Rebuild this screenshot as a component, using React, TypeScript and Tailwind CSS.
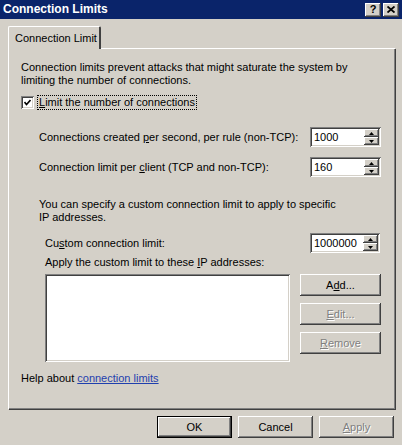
import React from 'react';

const raised =
  'bg-[#d4d0c8] shadow-[inset_-1px_-1px_#404040,inset_1px_1px_#ffffff,inset_-2px_-2px_#808080,inset_2px_2px_#d4d0c8]';
const sunken =
  'bg-white shadow-[inset_1px_1px_#808080,inset_-1px_-1px_#ffffff,inset_2px_2px_#404040,inset_-2px_-2px_#d4d0c8]';
const disabledText = 'text-[#808080] [text-shadow:1px_1px_0_#ffffff]';

const Spinner: React.FC<{ value: string; width?: string }> = ({ value, width = 'w-[71px]' }) => (
  <div className={`${sunken} ${width} h-[20px] flex items-stretch p-[2px] shrink-0`}>
    <div className="flex-1 flex items-center pl-[2px] pt-[1px]">{value}</div>
    <div className="w-[15px] flex flex-col">
      <div className={`${raised} flex-1 flex items-center justify-center`}>
        <svg width="5" height="3" viewBox="0 0 5 3">
          <path d="M2.5 0 L5 3 L0 3 Z" fill="#000" />
        </svg>
      </div>
      <div className={`${raised} flex-1 flex items-center justify-center`}>
        <svg width="5" height="3" viewBox="0 0 5 3">
          <path d="M0 0 L5 0 L2.5 3 Z" fill="#000" />
        </svg>
      </div>
    </div>
  </div>
);

const Button: React.FC<{ children: React.ReactNode; disabled?: boolean; isDefault?: boolean; className?: string }> = ({
  children,
  disabled,
  isDefault,
  className = '',
}) => (
  <div
    className={`${className} flex items-center justify-center ${
      isDefault
        ? 'bg-[#d4d0c8] border border-black shadow-[inset_-1px_-1px_#404040,inset_1px_1px_#ffffff,inset_-2px_-2px_#808080]'
        : raised
    } ${disabled ? disabledText : ''}`}
  >
    {children}
  </div>
);

const App: React.FC = () => {
  return (
    <div className="w-[402px] h-[445px] bg-[#d4d0c8] text-black text-[11px] leading-[13px] font-['Liberation_Sans',Arial,sans-serif] flex flex-col overflow-hidden select-none">
      {/* title bar */}
      <div className="h-[19px] bg-[#0a246a] flex items-center pl-[3px] pr-[3px]">
        <span className="text-white font-bold text-[12px]">Connection Limits</span>
        <div className="ml-auto flex gap-[2px]">
          <div className={`${raised} w-[16px] h-[14px] flex items-center justify-center font-bold text-[11px]`}>?</div>
          <div className={`${raised} w-[16px] h-[14px] flex items-center justify-center`}>
            <svg width="8" height="7" viewBox="0 0 8 7">
              <path d="M0.5 0.5 L7.5 6.5 M7.5 0.5 L0.5 6.5" stroke="#000" strokeWidth="1.8" />
            </svg>
          </div>
        </div>
      </div>

      {/* tab strip */}
      <div className="ml-[8px] mt-[7px] flex relative z-10">
        <div className="h-[23px] w-[93px] bg-[#d4d0c8] border-t border-l border-white border-r-2 border-r-[#404040] rounded-tl-[2px] rounded-tr-[2px] flex items-center pl-[6px] -mb-[1px]">
          Connection Limit
        </div>
      </div>

      {/* tab panel */}
      <div className="ml-[8px] w-[387px] h-[361px] border-t border-l border-white shadow-[inset_-1px_-1px_#808080,1px_1px_#404040] flex flex-col pl-[12px] pr-[14px]">
        <p className="mt-[12px]">
          Connection limits prevent attacks that might saturate the system by
          <br />
          limiting the number of connections.
        </p>

        <div className="mt-[8px] h-[15px] flex items-center">
          <div className={`${sunken} w-[13px] h-[13px] flex items-center justify-center`}>
            <svg width="7" height="7" viewBox="0 0 7 7">
              <path d="M0.5 3 L2.5 5.5 L6.5 1" stroke="#000" strokeWidth="1.6" fill="none" />
            </svg>
          </div>
          <span className="ml-[3px] px-[1px] border border-dotted border-black leading-[13px]">
            <u>L</u>imit the number of connections
          </span>
        </div>

        <div className="pl-[18px] flex flex-col">
          <div className="mt-[17px] h-[20px] flex items-center">
            <span className="flex-1">
              Connections created <u>p</u>er second, per rule (non-TCP):
            </span>
            <Spinner value="1000" />
          </div>
          <div className="mt-[10px] h-[20px] flex items-center">
            <span className="flex-1">
              Connection limit per <u>c</u>lient (TCP and non-TCP):
            </span>
            <Spinner value="160" />
          </div>

          <p className="mt-[21px]">
            You can specify a custom connection limit to apply to specific
            <br />
            IP addresses.
          </p>

          <div className="pl-[6px] flex flex-col">
            <div className="mt-[9px] h-[20px] flex items-center pr-[1px]">
              <span className="flex-1">
                Cu<u>s</u>tom connection limit:
              </span>
              <Spinner value="1000000" width="w-[70px]" />
            </div>
            <div className="mt-[3px] h-[13px]">
              Apply the custom limit to these <u>I</u>P addresses:
            </div>
            <div className="mt-[5px] flex gap-[10px]">
              <div className={`${sunken} w-[245px] h-[88px]`} />
              <div className="flex flex-col gap-[7px] w-[81px]">
                <Button className="h-[22px]">
                  <span>
                    A<u>d</u>d...
                  </span>
                </Button>
                <Button className="h-[22px]" disabled>
                  <span>
                    <u>E</u>dit...
                  </span>
                </Button>
                <Button className="h-[22px]" disabled>
                  <span>
                    <u>R</u>emove
                  </span>
                </Button>
              </div>
            </div>
          </div>
        </div>

        <div className="mt-[10px] h-[13px]">
          Help about <span className="text-[#1f3fae] underline">connection limits</span>
        </div>
      </div>

      {/* dialog buttons */}
      <div className="mt-[7px] flex justify-end gap-[6px] pr-[8px]">
        <Button className="w-[75px] h-[22px]" isDefault>
          OK
        </Button>
        <Button className="w-[75px] h-[22px]">Cancel</Button>
        <Button className="w-[75px] h-[22px]" disabled>
          <span>
            <u>A</u>pply
          </span>
        </Button>
      </div>
    </div>
  );
};

export default App;
